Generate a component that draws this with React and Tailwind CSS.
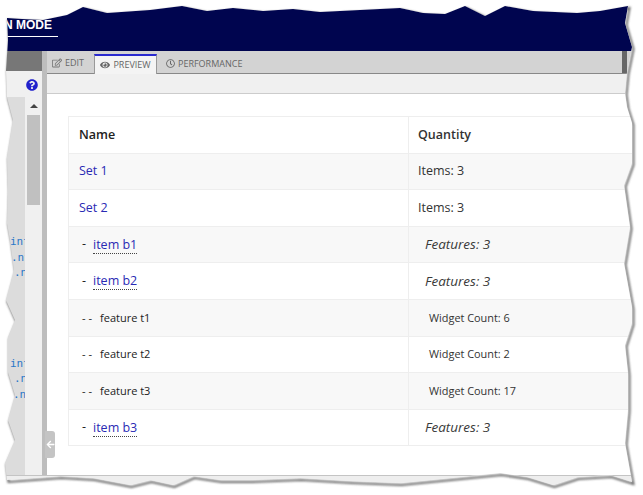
import React from "react";
import { FaRegEdit, FaEye, FaRegClock, FaQuestionCircle, FaArrowLeft } from "react-icons/fa";

const pts = "7,18 22,19 43,20 67,15 83,7 107,13 150,10 182,6 207,11 233,8 263,11 293,9 320,12 360,10 400,8 423,13 445,14 465,6 485,16 505,6 533,11 577,13 600,11 628,6 625,23 632,47 627,72 625,93 627,107 632,123 632,163 624,185 630,227 624,263 632,307 632,323 625,345 628,373 628,410 625,443 632,482 610,475 577,477 553,485 527,477 500,473 450,478 400,483 350,481 300,478 250,480 220,480 193,476 173,485 150,480 130,485 93,478 60,476 7,480 5,463 15,440 8,420 15,395 8,372 8,337 15,320 6,300 14,270 10,240 7,223 8,190 7,157 13,120 7,97 6,70 8,40";
const d = "M" + pts.split(" ").join(" L") + " Z";
const outer = "M0,0 H643 V495 H0 Z " + d;

const rows = [
  { n: "Set 1", q: "Items: 3", k: "set" },
  { n: "Set 2", q: "Items: 3", k: "set" },
  { n: "item b1", q: "Features: 3", k: "item" },
  { n: "item b2", q: "Features: 3", k: "item" },
  { n: "feature t1", q: "Widget Count: 6", k: "feat" },
  { n: "feature t2", q: "Widget Count: 2", k: "feat" },
  { n: "feature t3", q: "Widget Count: 17", k: "feat" },
  { n: "item b3", q: "Features: 3", k: "item" },
];

function NameCell({ r }) {
  if (r.k === "set") return <a className="block text-[#2a2ab4] text-[12.5px]">{r.n}</a>;
  if (r.k === "item")
    return (
      <span className="flex items-center pl-[3px] text-[12.5px]">
        <span className="w-[11px] text-[#222]">-</span>
        <a className="text-[#2a2ab4] leading-[17px] border-b border-dotted border-[#444]">{r.n}</a>
      </span>
    );
  return (
    <span className="flex items-center pl-[3px] text-[11px] text-[#222]">
      <span className="w-[18px]">- -</span>
      <span>{r.n}</span>
    </span>
  );
}

function QtyCell({ r }) {
  if (r.k === "set") return <span className="block text-[12.5px] text-[#333]">{r.q}</span>;
  if (r.k === "item") return <span className="block pl-[7px] text-[13.5px] italic text-[#3a3a3a]">{r.q}</span>;
  return <span className="block pl-[11px] text-[10.9px] text-[#333]">{r.q}</span>;
}

export default function App() {
  return (
    <div className="relative w-[643px] h-[495px] overflow-hidden bg-white font-['Open_Sans',sans-serif]">
      <div className="h-[51px] bg-[#00054f] flex flex-col pt-[16px]">
        <div className="w-[58px] h-[21px] pl-[4px] pt-[1px] border-b border-white text-white text-[12px] font-bold leading-[16px] whitespace-nowrap font-['Liberation_Sans',sans-serif]">N MODE</div>
      </div>
      <div className="flex h-[424px]">
        <aside className="w-[42px] shrink-0 flex flex-col">
          <div className="h-[20px] bg-[#777777] shrink-0" />
          <div className="h-[26px] bg-[#f0f0f0] shrink-0 flex items-center justify-end pr-[4px] pt-[2px]">
            <FaQuestionCircle className="w-[12px] h-[12px] text-[#2222cc]" />
          </div>
          <div className="flex-1 flex min-h-0">
            <div className="w-[25px] bg-[#dcdcdc] overflow-hidden pt-[137px] font-['DejaVu_Sans_Mono',monospace] text-[11px] leading-[15.5px] text-[#2a78c8]">
              <div className="pl-[10px] whitespace-nowrap">int</div>
              <div className="pl-[11px] whitespace-nowrap">.nt</div>
              <div className="pl-[14px] whitespace-nowrap">.nt</div>
              <div className="h-[75px]" />
              <div className="pl-[10px] whitespace-nowrap">int</div>
              <div className="pl-[14px] whitespace-nowrap">.nt</div>
              <div className="pl-[13px] whitespace-nowrap">.nt</div>
            </div>
            <div className="w-[17px] bg-[#f0f0f0] flex flex-col items-center pt-[7px]">
              <div className="w-0 h-0 border-x-[4px] border-x-transparent border-b-[4px] border-b-[#444]" />
              <div className="mt-[7px] w-[13px] h-[90px] bg-[#c0c0c0]" />
            </div>
          </div>
        </aside>
        <div className="w-[5px] shrink-0 bg-[#bdbdbd]" />
        <main className="flex-1 min-w-0 flex flex-col">
          <div className="h-[23px] shrink-0 bg-[#d3d3d3] border-b border-[#888] flex items-end pl-[5px]">
            <div className="flex items-center h-[22px] pt-[2px] gap-[3px] w-[42px] text-[9px] text-[#666]">
              <FaRegEdit className="w-[10px] h-[10px] text-[#777]" />
              <span>EDIT</span>
            </div>
            <div className="flex items-center justify-center gap-[3px] h-[20px] w-[63px] pb-[1px] -mb-px bg-[#f4f4f4] border-x border-[#999] border-t-2 border-t-[#2a2ad0] text-[9px] text-[#666]">
              <FaEye className="w-[10px] h-[10px] text-[#666]" />
              <span>PREVIEW</span>
            </div>
            <div className="flex items-center h-[22px] pt-[3px] gap-[3px] ml-[9px] text-[9px] text-[#666]">
              <FaRegClock className="w-[9px] h-[9px] text-[#666]" />
              <span>PERFORMANCE</span>
            </div>
            <div className="ml-auto mr-[16px] w-[5px] h-[22px] bg-[#666]" />
          </div>
          <div className="h-[20px] shrink-0 bg-[#f0f0f0] border-b border-[#cccccc]" />
          <div className="flex-1 min-h-0 overflow-hidden pl-[21px] pt-[22px]">
            <table className="w-[620px] table-fixed border-collapse border border-[#eeeeee] text-[#333]">
              <thead>
                <tr className="h-[36.6px] border-b border-[#eeeeee]">
                  <th className="w-[340px] border-r border-[#eeeeee] pl-[10px] pt-[2px] text-left text-[12.5px] font-semibold text-[#222]">Name</th>
                  <th className="pl-[9px] pt-[2px] text-left text-[12.5px] font-semibold text-[#333]">Quantity</th>
                </tr>
              </thead>
              <tbody>
                {rows.map((r, i) => (
                  <tr key={r.n} className={"h-[36.6px] border-b border-[#eeeeee] " + (i % 2 === 0 ? "bg-[#f8f8f8]" : "bg-white")}>
                    <td className="border-r border-[#eeeeee] pl-[10px]"><NameCell r={r} /></td>
                    <td className="pl-[9px]"><QtyCell r={r} /></td>
                  </tr>
                ))}
              </tbody>
            </table>
          </div>
        </main>
      </div>
      <div className="h-[20px] bg-[#eeeeee] border-t border-[#c4c4c4]" />
      <div className="absolute left-[45px] top-[431px] w-[10px] h-[27px] bg-[#c4c4c4] rounded-r-[3px] flex items-center justify-center">
        <FaArrowLeft className="w-[9px] h-[9px] text-white" />
      </div>
      <svg className="absolute inset-0" width="643" height="495" viewBox="0 0 643 495">
        <defs>
          <filter id="b" x="-5%" y="-5%" width="110%" height="110%"><feGaussianBlur stdDeviation="1.3" /></filter>
          <clipPath id="c"><path d={outer} clipRule="evenodd" /></clipPath>
        </defs>
        <path d={outer} fillRule="evenodd" fill="#ffffff" />
        <g clipPath="url(#c)">
          <path d={d} fill="none" stroke="#666666" strokeWidth="2" filter="url(#b)" transform="translate(1.5 2)" />
        </g>
      </svg>
    </div>
  );
}
